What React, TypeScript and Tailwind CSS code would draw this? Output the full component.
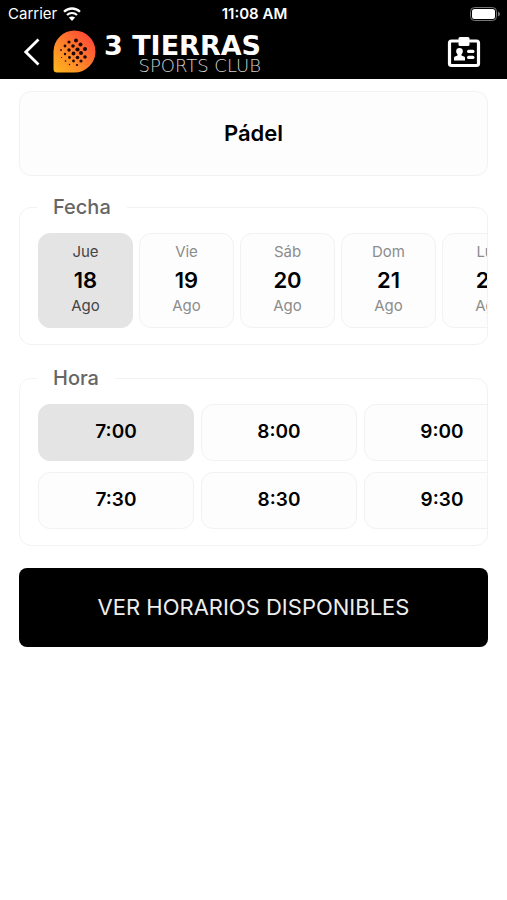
import { useState } from "react";

const days = [
  { name: "Jue", number: 18, month: "Ago" },
  { name: "Vie", number: 19, month: "Ago" },
  { name: "Sáb", number: 20, month: "Ago" },
  { name: "Dom", number: 21, month: "Ago" },
  { name: "Lun", number: 22, month: "Ago" },
];

const hours = ["7:00", "7:30", "8:00", "8:30", "9:00", "9:30"];

// x, y, radius of the holes in the racket
const dots = [
  [23, 10.5, 2], [16, 12, 1.6],
  [27.5, 14.5, 2], [20, 16, 1.8], [12, 16, 1.4],
  [32, 19, 2.1], [24.5, 19.5, 2.1], [16, 20, 1.7], [8, 20, 0.9],
  [28, 23, 2], [20.5, 23.5, 1.9], [12, 24, 1.2],
  [32, 27, 1.8], [24.5, 27.5, 1.8], [16.5, 27.5, 1.4], [8.5, 27.5, 0.6],
  [28, 31, 1.6], [20.5, 31, 1.4], [12.5, 31, 0.8],
  [24, 35, 1.1], [16.5, 34.5, 0.7],
];

const StatusBar = () => (
  <div className="grid grid-cols-3 items-center h-7 pl-2 pr-1.5 text-[15px]">
    <div className="flex items-center gap-1.5">
      <span>Carrier</span>
      <svg width="18" height="14" viewBox="0 0 18 14" fill="none" stroke="white">
        <path d="M1 4.8C5.5 .4 12.5 .4 17 4.8" strokeWidth="2.3" />
        <path d="M4 8C6.8 5.3 11.2 5.3 14 8" strokeWidth="2.2" />
        <path d="M9 14L5.9 10.6C7.6 9 10.4 9 12.1 10.6Z" fill="white" stroke="none" />
      </svg>
    </div>
    <span className="text-center font-semibold">11:08 AM</span>
    <svg className="justify-self-end" width="31" height="14" viewBox="0 0 31 14">
      <rect x="0.5" y="0.5" width="26" height="13" rx="4" fill="none" stroke="#777" />
      <rect x="2" y="2" width="23" height="10" rx="2.5" fill="white" />
      <path d="M28 4.5Q30 5.5 30 7T28 9.5Z" fill="#777" />
    </svg>
  </div>
);

const Logo = () => (
  <div className="flex items-center gap-2">
    <svg width="43" height="43" viewBox="0 0 43 43">
      <defs>
        <linearGradient id="racket" x1="0" y1="1" x2="1" y2="0">
          <stop offset="0.05" stopColor="#ffb41f" />
          <stop offset="0.5" stopColor="#ff7a2c" />
          <stop offset="0.9" stopColor="#ff4638" />
        </linearGradient>
      </defs>
      <path
        d="M21.5 0.5A21 21 0 0 1 21.5 42.5H4Q0.5 42.5 0.5 39V21.5A21 21 0 0 1 21.5 0.5Z"
        fill="url(#racket)"
      />
      {dots.map(([x, y, r]) => (
        <circle key={`${x}-${y}`} cx={x} cy={y} r={r} fill="#1d0905" />
      ))}
    </svg>
    <div className="pt-1 text-right font-['DejaVu_Sans',sans-serif]">
      <p className="text-[27px] leading-6 font-bold">3 TIERRAS</p>
      <p className="text-lg leading-4 font-extralight text-[#d0d0d0]">SPORTS CLUB</p>
    </div>
  </div>
);

const App = () => {
  const [day, setDay] = useState(18);
  const [hour, setHour] = useState("7:00");

  return (
    <div className="min-h-screen bg-white text-black font-[Inter,sans-serif]">
      <header className="bg-black text-white">
        <StatusBar />
        <nav className="flex items-center justify-between h-[51px] pl-5 pr-6 pb-1">
          <div className="flex items-center gap-2">
            <button aria-label="Volver" className="py-2 px-1">
              <svg width="17" height="28" viewBox="0 0 17 28" fill="none" stroke="white" strokeWidth="2.8">
                <path d="M14.5 1.5L1.8 14L14.5 26.5" />
              </svg>
            </button>
            <Logo />
          </div>
          <button aria-label="Credencial">
            <svg width="38" height="32" viewBox="0 0 38 32" fill="white">
              <rect x="4.5" y="5" width="29" height="24.5" rx="2" fill="none" stroke="white" strokeWidth="3.2" />
              <rect x="13.5" y="1" width="11" height="9" rx="1.5" />
              <circle cx="14.5" cy="15.3" r="3.3" />
              <path d="M12.5 17h4v2.4l3 1.4Q20 21 20 22V24.5H9V22Q9 21 9.5 20.8l3-1.4Z" />
              <rect x="22" y="13.7" width="7.5" height="3.4" rx="1.7" />
              <rect x="22" y="19.7" width="7.5" height="3.4" rx="1.7" />
            </svg>
          </button>
        </nav>
      </header>

      <main className="flex flex-col px-[19px] pt-3">
        <div className="flex items-center justify-center h-[85px] rounded-xl border border-[#f2f2f2] bg-[#fdfdfd]">
          <h1 className="text-[22px] font-semibold">Pádel</h1>
        </div>

        <fieldset className="min-w-0 mt-[17px] rounded-xl border border-[#f2f2f2]">
          <legend className="ml-[17px] px-4 text-xl leading-7 font-medium text-[#666]">
            Fecha
          </legend>
          <div className="flex gap-1.5 pt-3 pb-4 pl-[18px] overflow-x-auto [scrollbar-width:none]">
            {days.map(({ name, number, month }) => (
              <button
                key={number}
                onClick={() => setDay(number)}
                className={`shrink-0 w-[95px] h-[95px] pb-1 rounded-xl border text-[15px] leading-5 ${
                  day === number
                    ? "border-[#e4e4e4] bg-[#e4e4e4] text-[#444]"
                    : "border-[#f2f2f2] bg-[#fdfdfd] text-[#8c8c8c]"
                }`}
              >
                <span className="block">{name}</span>
                <span className="block pt-1 pb-0.5 text-[22px] leading-7 font-semibold text-black">
                  {number}
                </span>
                <span className="block">{month}</span>
              </button>
            ))}
          </div>
        </fieldset>

        <fieldset className="min-w-0 mt-[19px] rounded-xl border border-[#f2f2f2]">
          <legend className="ml-[17px] px-4 text-xl leading-7 font-medium text-[#666]">
            Hora
          </legend>
          <div className="grid grid-flow-col grid-rows-2 auto-cols-[156px] gap-x-[7px] gap-y-[11px] pt-3 pb-4 pl-[18px] overflow-x-auto [scrollbar-width:none]">
            {hours.map((h) => (
              <button
                key={h}
                onClick={() => setHour(h)}
                className={`h-[57px] rounded-xl border text-[19px] font-semibold ${
                  hour === h
                    ? "border-[#e4e4e4] bg-[#e4e4e4]"
                    : "border-[#f2f2f2] bg-[#fdfdfd]"
                }`}
              >
                {h}
              </button>
            ))}
          </div>
        </fieldset>

        <button className="h-[79px] mt-[22px] rounded-lg bg-black text-[22px] text-[#eee]">
          VER HORARIOS DISPONIBLES
        </button>
      </main>
    </div>
  );
};

export default App;
